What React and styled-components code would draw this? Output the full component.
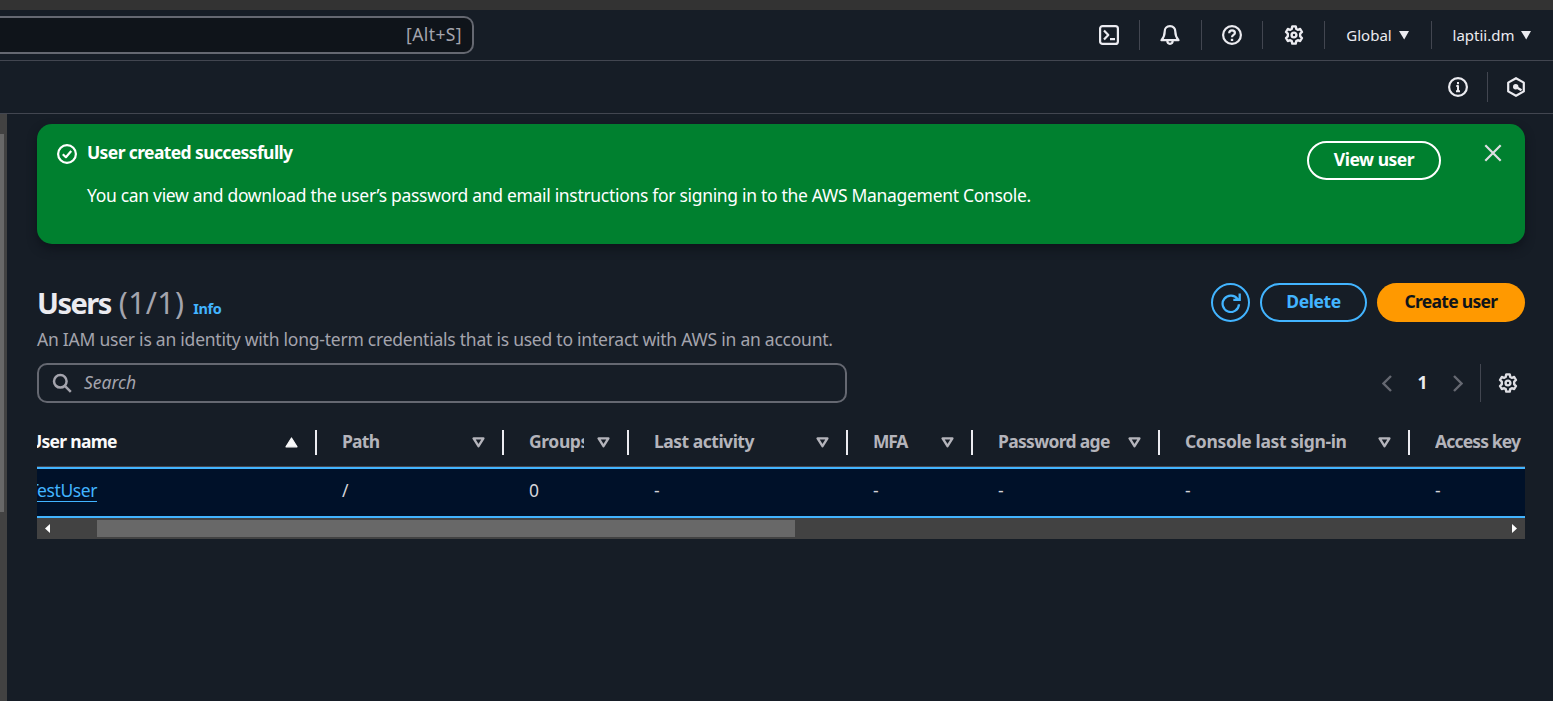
import React from "react";
import styled, { createGlobalStyle, css } from "styled-components";

const color = {
  page: "#161d26",
  line: "#424650",
  control: "#656871",
  text: "#ebebf0",
  muted: "#a4a4ad",
  icon: "#dedee3",
  link: "#42b4ff",
  success: "#00802f",
  primary: "#ff9900",
  selected: "#001129",
  track: "#424242",
  thumb: "#686868",
};

const GlobalStyle = createGlobalStyle`
  * { box-sizing: border-box; }
  body {
    margin: 0;
    background: ${color.page};
    color: ${color.text};
    font: 400 17.5px/25px "Noto Sans", "Open Sans", sans-serif;
    overflow: hidden;
  }
  svg { display: block; flex: none; }
`;

const Page = styled.div`
  height: 701px;
  display: flex;
  flex-direction: column;
  overflow: hidden;
`;

const BrowserEdge = styled.div`
  height: 10px;
  flex: none;
  background: #333;
`;

const Label = styled.span`
  white-space: nowrap;
  letter-spacing: ${(p) => p.$track || 0}px;
`;

const TopNav = styled.header`
  height: 51px;
  flex: none;
  display: flex;
  align-items: flex-start;
  justify-content: space-between;
  border-bottom: 1px solid ${color.line};
`;

const GlobalSearch = styled.div`
  width: 474px;
  height: 38px;
  margin-top: 6px;
  padding: 0 10px 2px 0;
  display: flex;
  align-items: center;
  justify-content: flex-end;
  color: ${color.muted};
  background: #0f141a;
  border: 2px solid ${color.control};
  border-left: 0;
  border-radius: 0 10px 10px 0;
`;

const Utilities = styled.nav`
  display: flex;
  align-items: center;
  height: 50px;
`;

const Utility = styled.div`
  width: ${(p) => p.$width}px;
  height: ${(p) => p.$height || 28}px;
  padding-right: ${(p) => p.$inset || 0}px;
  display: flex;
  align-items: center;
  justify-content: center;
  color: ${color.text};
  font-size: 15px;
  gap: 7px;
  & + & { border-left: 1px solid ${color.line}; }
`;

const SubNav = styled.div`
  height: 53px;
  flex: none;
  display: flex;
  align-items: center;
  justify-content: flex-end;
  padding-right: 8px;
  border-bottom: 1px solid ${color.line};
`;

const Body = styled.div`
  flex: 1;
  min-height: 0;
  display: flex;
`;

const PanelScrollbar = styled.div`
  width: 7px;
  flex: none;
  padding-top: 20px;
  background: ${color.track};
`;

const PanelThumb = styled.div`
  width: 4px;
  height: 378px;
  background: ${color.thumb};
`;

const Main = styled.main`
  flex: 1;
  min-width: 0;
  padding: 10px 28px 0 30px;
`;

const Flash = styled.section`
  height: 120px;
  padding: 16px 22px 0 20px;
  display: flex;
  align-items: flex-start;
  color: #fff;
  background: ${color.success};
  border-radius: 15px;
  box-shadow: 0 5px 10px #0f141c;
`;

const FlashIcon = styled.div`
  padding-top: 4px;
  margin-right: 10px;
`;

const FlashText = styled.div`
  flex: 1;
  display: flex;
  flex-direction: column;
  gap: 18px;
`;

const FlashAction = styled.div`
  margin-top: 1px;
`;

const Strong = styled(Label)`
  font-weight: 700;
`;

const Button = styled.button`
  height: 39px;
  width: ${(p) => p.$width}px;
  padding: 0 0 ${(p) => (p.$iconOnly ? 0 : 3)}px;
  display: flex;
  align-items: center;
  justify-content: center;
  font: inherit;
  line-height: 24px;
  font-weight: 700;
  border-radius: 20px;
  ${(p) =>
    p.$primary
      ? css`
          color: #0f141a;
          background: ${color.primary};
          border: 0;
        `
      : css`
          color: ${p.$onFlash ? "#fff" : color.link};
          background: transparent;
          border: 2px solid currentColor;
        `}
`;

const Dismiss = styled.div`
  margin: 3px 0 0 42px;
  color: #dedee3;
`;

const TitleRow = styled.div`
  margin-top: 39px;
  height: 43px;
  display: flex;
  justify-content: space-between;
`;

const Title = styled.h1`
  margin: 0;
  display: flex;
  align-items: baseline;
  font-size: 30px;
  line-height: 39px;
  font-weight: 700;
`;

const TitleText = styled(Label)`
  font-size: 29px;
`;

const Counter = styled(Label)`
  margin-left: 8px;
  color: ${color.muted};
  font-weight: 400;
`;

const InfoLink = styled(Label)`
  margin-left: 9px;
  color: ${color.link};
  font-size: 14.5px;
`;

const Actions = styled.div`
  display: flex;
  gap: 10px;
`;

const Description = styled.p`
  margin: 1px 0 11px;
  color: ${color.muted};
`;

const FilterRow = styled.div`
  display: flex;
  justify-content: space-between;
`;

const SearchBox = styled.div`
  width: 810px;
  height: 40px;
  padding-left: 13px;
  display: flex;
  align-items: center;
  gap: 12px;
  border: 2px solid ${color.control};
  border-radius: 10px;
  color: ${color.muted};
`;

const Placeholder = styled(Label)`
  padding-bottom: 2px;
  font-style: italic;
`;

const Pagination = styled.div`
  height: 40px;
  display: flex;
  align-items: center;
  color: ${color.text};
`;

const PageNumber = styled(Strong)`
  width: 61px;
  padding-bottom: 2px;
  text-align: center;
`;

const PreferencesButton = styled.div`
  height: 38px;
  margin-left: 17px;
  padding: 0 7px 0 17px;
  display: flex;
  align-items: center;
  border-left: 1px solid ${color.line};
  color: ${color.icon};
`;

const Table = styled.div`
  overflow: hidden;
`;

const columnTracks = css`
  display: grid;
  grid-template-columns: 280px 187px 125px 219px 125px 187px 250px 115px;
`;

const HeaderRow = styled.div`
  ${columnTracks}
  height: 64px;
  padding-top: 27px;
  border-bottom: 1px solid ${color.line};
`;

const HeaderCell = styled.div`
  height: 25px;
  padding: 0 ${(p) => (p.$last ? 0 : 17)}px 0 ${(p) => (p.$first ? 0 : 25)}px;
  display: flex;
  align-items: center;
  justify-content: space-between;
  color: ${(p) => (p.$first ? "#f9f9fa" : "#b4b4bb")};
  border-right: ${(p) => (p.$last ? 0 : "2px solid #ebebf0")};
`;

const HeaderLabel = styled.div`
  flex: 1;
  overflow: hidden;
  display: flex;
  padding-bottom: 2px;
  margin-right: ${(p) => (p.$last ? 0 : 13)}px;
`;

const DataRow = styled.div`
  ${columnTracks}
  height: 51px;
  align-items: center;
  background: ${color.selected};
  border-top: 2px solid ${color.link};
  border-bottom: 2px solid ${color.link};
`;

const DataCell = styled.div`
  padding: 0 0 5px ${(p) => (p.$first ? 0 : 25)}px;
  overflow: hidden;
  display: flex;
  color: #d4d4d9;
`;

/* The table is scrolled sideways, so its first column starts outside the view. */
const scrolledAway = css`
  margin-left: -8px;
`;

const FirstHeading = styled(Strong)`
  ${scrolledAway}
`;

const UserLink = styled(Label)`
  ${scrolledAway}
  height: 23px;
  line-height: 22px;
  color: ${color.link};
  border-bottom: 1px solid ${color.link};
`;

const Scrollbar = styled.div`
  height: 21px;
  padding: 0 8px;
  display: flex;
  align-items: center;
  background: ${color.track};
`;

const ScrollThumb = styled.div`
  width: 698px;
  height: 17px;
  margin: 0 auto 0 47px;
  background: ${color.thumb};
`;

const Icon = ({ children, width = 2.2 }) => (
  <svg width="20" height="20" viewBox="0 0 20 20" fill="none" stroke="currentColor" strokeWidth={width} strokeLinejoin="round">
    {children}
  </svg>
);

const Gear = () => (
  <Icon width={2.4}>
    <path d="M8.3 1.4h3.4l.6 2.5 1.5.9 2.4-.8 1.8 3-1.8 1.7v2.6l1.8 1.7-1.8 3-2.4-.8-1.5.9-.6 2.5H8.3l-.6-2.5-1.5-.9-2.4.8-1.8-3 1.8-1.7V8.7L2 7l1.8-3 2.4.8 1.5-.9z" />
    <circle cx="10" cy="10" r="2.4" />
  </Icon>
);

const Caret = () => (
  <svg width="10" height="9" viewBox="0 0 10 9" fill="currentColor">
    <path d="M0 0H10L5.2 8.4z" />
  </svg>
);

const SortIcon = ({ ascending }) => (
  <svg width="13" height="11" viewBox="0 0 13 11" strokeLinejoin="round" stroke="currentColor">
    {ascending ? (
      <path d="M1 9.8 6.5 1 12 9.8z" fill="currentColor" strokeWidth="1.2" />
    ) : (
      <path d="M1.6 1.4h9.8L6.5 9.2z" fill="none" strokeWidth="2.4" />
    )}
  </svg>
);

const Chevron = ({ right }) => (
  <svg width="10" height="17" viewBox="0 0 10 17" fill="none" stroke="#656871" strokeWidth="2.4">
    <path d={right ? "M1 1l7.5 7.5L1 16" : "M9 1L1.5 8.5 9 16"} />
  </svg>
);

const ScrollArrow = ({ right }) => (
  <svg width="5" height="9" viewBox="0 0 5 9" fill="#fff">
    <path d={right ? "M0 0l5 4.5-5 4.5z" : "M5 0L0 4.5 5 9z"} />
  </svg>
);

const columns = [
  { title: "User name", track: -0.72 },
  { title: "Path", track: -0.75, value: "/" },
  { title: "Groups", track: -0.4, value: "0" },
  { title: "Last activity", track: -0.49, value: "-" },
  { title: "MFA", track: -1.2, value: "-" },
  { title: "Password age", track: -0.68, value: "-" },
  { title: "Console last sign-in", track: -0.36, value: "-" },
  { title: "Access key", track: -0.84, value: "-" },
];

export default function App() {
  return (
    <Page>
      <GlobalStyle />
      <BrowserEdge />
      <TopNav>
        <GlobalSearch>
          <Label $track={0.4}>[Alt+S]</Label>
        </GlobalSearch>
        <Utilities>
          <Utility $width={61}>
            <Icon>
              <rect x="1.1" y="1.1" width="17.8" height="17.8" rx="2.5" />
              <path d="M5 5.5 9.3 10 5 14.5M11 14.2h5" />
            </Icon>
          </Utility>
          <Utility $width={62} $height={30} $inset={2}>
            <Icon>
              <path d="M10 1.2c-3.5 0-5.3 2.5-5.3 5.3 0 4-1.2 6.3-3.2 8.7h17c-2-2.4-3.2-4.7-3.2-8.7 0-2.8-1.8-5.3-5.3-5.3z" />
              <path d="M7.3 15.5c0 2 1 3.3 2.7 3.3s2.7-1.3 2.7-3.3" />
            </Icon>
          </Utility>
          <Utility $width={61} $height={30}>
            <Icon>
              <circle cx="10" cy="10" r="8.9" />
              <path d="M7.2 8.2C7.2 6.3 8.3 5.3 10 5.3s2.9 1 2.9 2.6c0 2-2.9 2-2.9 4.3" />
              <path d="M10 13.8v2.2" strokeWidth="2.4" />
            </Icon>
          </Utility>
          <Utility $width={62}><Gear /></Utility>
          <Utility $width={107} $inset={1}>
            <Label>Global</Label>
            <Caret />
          </Utility>
          <Utility $width={122} $inset={1}>
            <Label>laptii.dm</Label>
            <Caret />
          </Utility>
        </Utilities>
      </TopNav>
      <SubNav>
        <Utility $width={59}>
          <Icon>
            <circle cx="10" cy="10" r="8.9" />
            <path d="M10 5v2.2M8.3 9H10v5M8 14.3h4" strokeWidth="2" />
          </Icon>
        </Utility>
        <Utility $width={58} $height={30} $inset={2}>
          <Icon>
            <path d="M10 1.2 17.8 5.6v8.8L10 18.8 2.2 14.4V5.6z" />
            <circle cx="9.7" cy="9.7" r="2.7" fill="currentColor" stroke="none" />
            <path d="M10 10l5.5 3.3" strokeWidth="2.4" />
          </Icon>
        </Utility>
      </SubNav>
      <Body>
        <PanelScrollbar>
          <PanelThumb />
        </PanelScrollbar>
        <Main>
          <Flash>
            <FlashIcon>
              <Icon>
                <circle cx="10" cy="10" r="8.9" />
                <path d="M5.8 10.2 8.9 13.2 14.2 7" />
              </Icon>
            </FlashIcon>
            <FlashText>
              <Strong $track={-0.61}>User created successfully</Strong>
              <Label $track={-0.31}>
                You can view and download the user’s password and email instructions for signing in to the AWS Management Console.
              </Label>
            </FlashText>
            <FlashAction>
              <Button $width={134} $onFlash>
                <Label $track={-0.48}>View user</Label>
              </Button>
            </FlashAction>
            <Dismiss>
              <Icon>
                <path d="M2.3 2.3l15.4 15.4M17.7 2.3L2.3 17.7" />
              </Icon>
            </Dismiss>
          </Flash>
          <TitleRow>
            <Title>
              <TitleText $track={-1.5}>Users</TitleText>
              <Counter $track={0.4}>(1/1)</Counter>
              <InfoLink $track={-0.45}>Info</InfoLink>
            </Title>
            <Actions>
              <Button $width={39} $iconOnly>
                <Icon width={2.3}>
                  <path d="M16.6 6.2A8.2 8.2 0 1 0 18 11.2M18.7 .5v6.4h-6.4" strokeLinejoin="miter" />
                </Icon>
              </Button>
              <Button $width={107}>
                <Label $track={-0.4}>Delete</Label>
              </Button>
              <Button $width={148} $primary>
                <Label $track={-0.7}>Create user</Label>
              </Button>
            </Actions>
          </TitleRow>
          <Description>
            <Label $track={-0.235}>
              An IAM user is an identity with long-term credentials that is used to interact with AWS in an account.
            </Label>
          </Description>
          <FilterRow>
            <SearchBox>
              <Icon width={2.5}>
                <circle cx="8.3" cy="8.3" r="6.3" />
                <path d="M12.8 12.8 18.8 18.8" />
              </Icon>
              <Placeholder>Search</Placeholder>
            </SearchBox>
            <Pagination>
              <Chevron />
              <PageNumber>1</PageNumber>
              <Chevron right />
              <PreferencesButton><Gear /></PreferencesButton>
            </Pagination>
          </FilterRow>
          <Table>
            <HeaderRow>
              {columns.map(({ title, track }, i) => {
                const first = i === 0;
                const last = i === columns.length - 1;
                const Text = first ? FirstHeading : Strong;
                return (
                  <HeaderCell key={title} $first={first} $last={last}>
                    <HeaderLabel $last={last}>
                      <Text $track={track}>{title}</Text>
                    </HeaderLabel>
                    {!last && <SortIcon ascending={first} />}
                  </HeaderCell>
                );
              })}
            </HeaderRow>
            <DataRow>
              {columns.map(({ title, value }, i) => (
                <DataCell key={title} $first={i === 0}>
                  {i === 0 ? <UserLink $track={-0.4}>TestUser</UserLink> : <Label>{value}</Label>}
                </DataCell>
              ))}
            </DataRow>
          </Table>
          <Scrollbar>
            <ScrollArrow />
            <ScrollThumb />
            <ScrollArrow right />
          </Scrollbar>
        </Main>
      </Body>
    </Page>
  );
}
